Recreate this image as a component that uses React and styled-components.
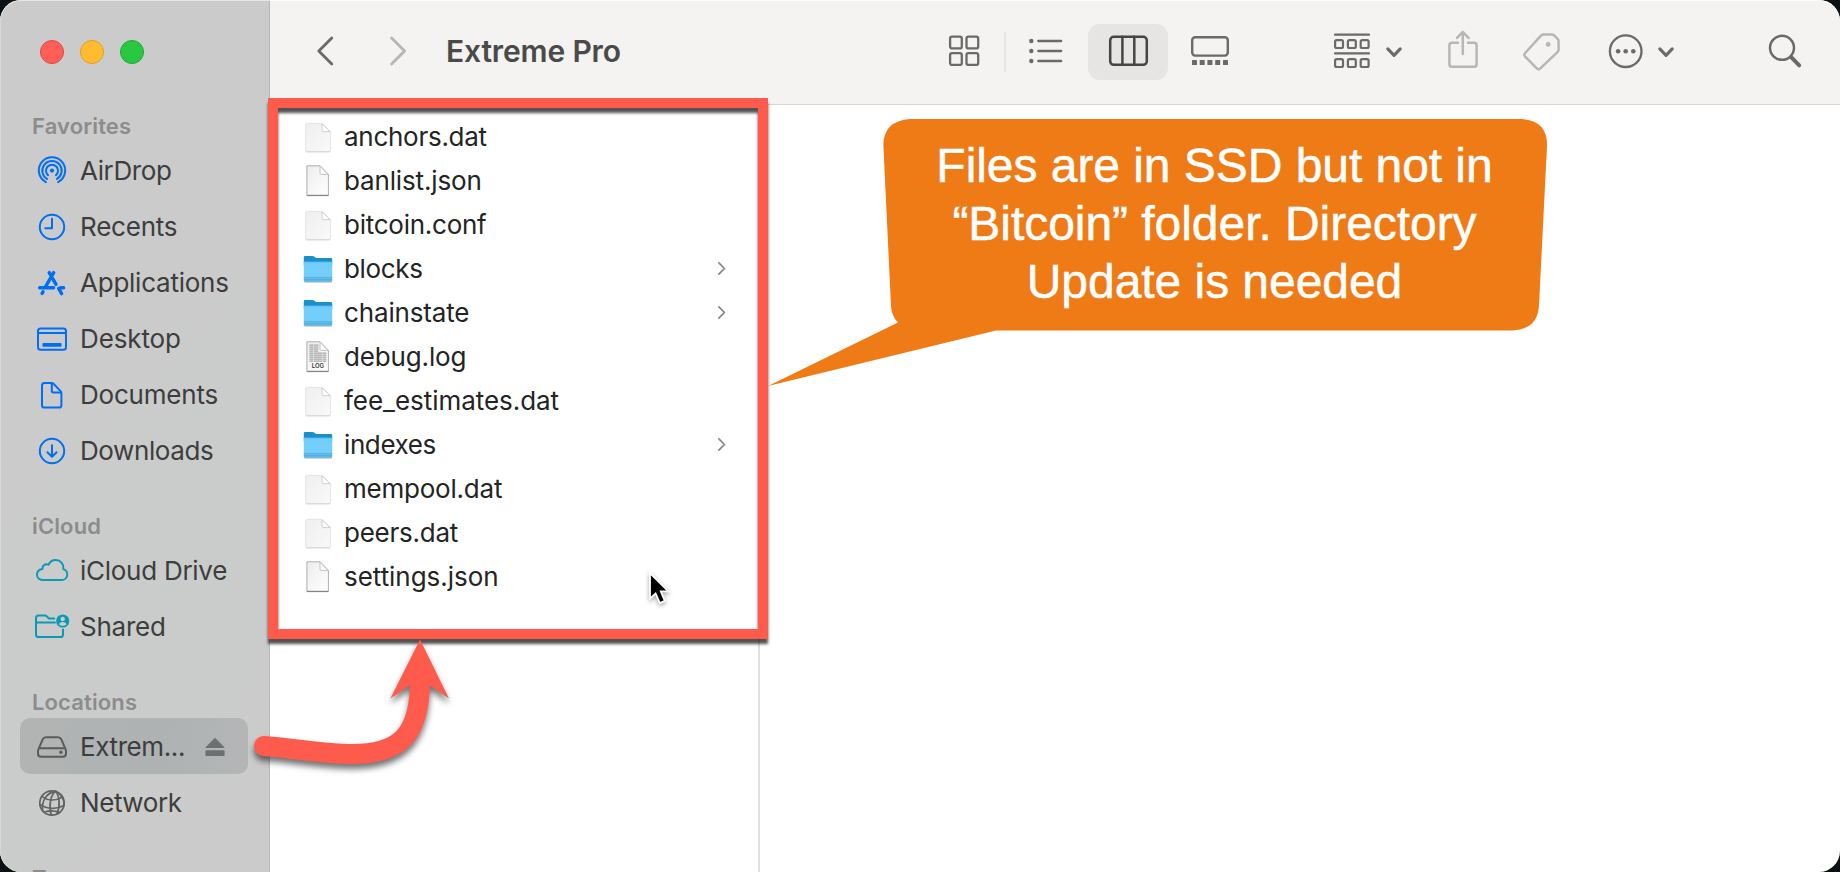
import React from "react";
import styled, { createGlobalStyle } from "styled-components";

const GlobalStyle = createGlobalStyle`
  html, body { margin: 0; height: 100%; background: #0d1015; overflow: hidden; }
  *, *::before, *::after { box-sizing: border-box; }
  svg { display: block; flex: none; overflow: visible; }
`;

const Window = styled.div`
  position: relative;
  display: flex;
  width: 1840px;
  height: 872px;
  border-radius: 21px;
  overflow: hidden;
  background: #fff;
  font-family: Inter, "Liberation Sans", sans-serif;
  &::after {
    content: "";
    position: absolute;
    inset: 0;
    border-radius: 21px;
    box-shadow: inset 0 1px 0 rgba(255, 255, 255, 0.55), inset 1px 0 0 rgba(255, 255, 255, 0.25);
    pointer-events: none;
  }
`;

const Sidebar = styled.nav`
  flex: none;
  width: 270px;
  height: 872px;
  overflow: hidden;
  background: linear-gradient(135deg, #cbcbcb 35%, #cacccb 60%, #cbcbcb);
  border-right: 1px solid #b8b8b8;
  padding-top: 40px;
`;

const TrafficLights = styled.div`
  display: flex;
  gap: 16px;
  padding-left: 40px;
  height: 70px;
`;

const Light = styled.span`
  width: 24px;
  height: 24px;
  border-radius: 50%;
  background: ${(p) => p.$fill};
  border: 1px solid ${(p) => p.$edge};
`;

const Section = styled.section`
  margin-bottom: 32px;
`;

const SectionTitle = styled.h2`
  margin: 0;
  padding-left: 32px;
  height: 32px;
  font-size: 22px;
  line-height: 32px;
  font-weight: 600;
  letter-spacing: 0.13px;
  color: #8c8c8c;
`;

const SidebarItem = styled.div`
  display: flex;
  align-items: center;
  height: 56px;
  margin: 0 21px 0 20px;
  padding: 0 23px 0 16px;
  border-radius: 10px;
  background: ${(p) => (p.$selected ? "linear-gradient(100deg, #b2b4b3, #aeb2b3 60%, #b4b6b6)" : "transparent")};
`;

const SidebarLabel = styled.span`
  flex: 1;
  min-width: 0;
  margin-left: 12px;
  padding-top: 2px;
  font-size: 26px;
  line-height: 54px;
  letter-spacing: ${(p) => p.$track || 0}px;
  white-space: nowrap;
  color: #3d3d3d;
`;

const Main = styled.main`
  flex: 1;
  display: flex;
  flex-direction: column;
`;

const Toolbar = styled.header`
  display: flex;
  align-items: center;
  height: 105px;
  padding: 0 40px 1px 47px;
  background: #f4f3f1;
  border-bottom: 1px solid #d6d6d6;
  color: #6b6a68;
`;

const Title = styled.h1`
  margin: 0 0 0 39px;
  padding-bottom: 2px;
  width: 503px;
  font-size: 30px;
  line-height: 40px;
  font-weight: 600;
  letter-spacing: -0.15px;
  color: #4a4a49;
`;

const Tool = styled.span`
  display: flex;
  margin-left: ${(p) => p.$gap || 0}px;
  color: ${(p) => (p.$dim ? "#b7b6b4" : "inherit")};
`;

const ToolDivider = styled.span`
  width: 2px;
  height: 40px;
  margin-left: 24px;
  background: #e6e5e3;
`;

const ActiveTool = styled.span`
  display: grid;
  place-items: center;
  width: 80px;
  height: 56px;
  margin-left: 26px;
  border-radius: 12px;
  background: #e6e5e3;
  color: #454543;
`;

const Columns = styled.div`
  flex: 1;
  display: flex;
`;

const Column = styled.ul`
  margin: 0;
  padding: 9px 32px 0 32px;
  width: 490px;
  list-style: none;
  border-right: 2px solid #dfdfdf;
`;

const FileRow = styled.li`
  display: flex;
  align-items: center;
  height: 44px;
`;

const FileName = styled.span`
  flex: 1;
  margin-left: 10px;
  padding-top: 2px;
  font-size: 26px;
  line-height: 42px;
  letter-spacing: ${(p) => p.$track}px;
  white-space: nowrap;
  color: #242424;
`;

const Frame = styled.div`
  position: absolute;
  left: 268px;
  top: 98px;
  width: 500px;
  height: 541px;
  border: 10px solid #ff5b4c;
  filter: drop-shadow(0 5px 1.6px rgba(0, 0, 0, 0.68));
`;

const Arrow = styled.svg`
  position: absolute;
  left: 250px;
  top: 636px;
  filter: drop-shadow(0 5px 3px rgba(0, 0, 0, 0.55));
`;

const Cursor = styled.svg`
  position: absolute;
  left: 646px;
  top: 569px;
  filter: drop-shadow(0 2px 2px rgba(0, 0, 0, 0.35));
`;

const Callout = styled.div`
  position: absolute;
  left: 768px;
  top: 119px;
  width: 780px;
  height: 268px;
`;

const CalloutShape = styled.svg`
  position: absolute;
  left: 0;
  top: 0;
`;

const CalloutText = styled.p`
  position: relative;
  margin: 0;
  padding: 18px 0 0 113px;
  font: 48px/58px "Liberation Sans", Arial, sans-serif;
  letter-spacing: -0.05px;
  -webkit-text-stroke: 0.5px #fff;
  text-align: center;
  color: #fff;
`;

const BLUE = "#006ff2";
const TEAL = "#0a9ab4";
const GRAY = "#626464";

function SideIcon({ color = BLUE, width = 2, children }) {
  return (
    <svg width="32" height="32" viewBox="0 0 32 32" fill="none" stroke={color} strokeWidth={width} strokeLinecap="round" strokeLinejoin="round">
      {children}
    </svg>
  );
}

const AirDropIcon = () => (
  <SideIcon>
    <path d="M9.9 28.1A13.2 13.2 0 1 1 22.1 28.1" />
    <path d="M11 24.9A9.7 9.7 0 1 1 21 24.9" />
    <path d="M12.1 21.2A6 6 0 1 1 19.9 21.2" />
    <circle cx="16" cy="16.6" r="2.1" fill={BLUE} stroke="none" />
  </SideIcon>
);

const RecentsIcon = () => (
  <SideIcon>
    <circle cx="16" cy="17" r="12.2" />
    <path d="M16 8.8V18.2H9.3" />
  </SideIcon>
);

const ApplicationsIcon = () => (
  <SideIcon width={3.4}>
    <path d="M13.2 6.6L20 18.4M22.6 22.4L25.6 27.6M17.7 6.6L9.6 20.6M7 25.8L6.1 27.4M3.6 21.7H17.6M24.6 21.7H27.6" />
  </SideIcon>
);

const DesktopIcon = () => (
  <SideIcon>
    <rect x="2" y="6.4" width="28" height="21.4" rx="2.6" />
    <path d="M2 11H30" strokeWidth="1.8" />
    <rect x="6.5" y="21" width="19" height="3.8" rx="0.8" fill={BLUE} stroke="none" />
  </SideIcon>
);

const DocumentsIcon = () => (
  <SideIcon>
    <path d="M6 7.4Q6 4.9 8.5 4.9H15.4Q16.6 4.9 17.5 5.8L24.6 13.1Q25.4 14 25.4 15.2V27.2Q25.4 29.6 23 29.6H8.5Q6 29.6 6 27.2Z" />
    <path d="M15.8 5.5V12.8Q15.8 14.4 17.4 14.4H24.8" />
  </SideIcon>
);

const DownloadsIcon = () => (
  <SideIcon>
    <circle cx="16" cy="17" r="12.2" />
    <path d="M16 11.2V22.6M11.4 18.2L16 22.8L20.6 18.2" />
  </SideIcon>
);

const CloudIcon = () => (
  <SideIcon color={TEAL}>
    <path d="M7.6 26.1H25.4A5.7 5.7 0 0 0 27.4 15C28 9.8 24.4 6 19.8 6C16.2 6 13.8 7.9 12.6 10.6C9.4 9.2 6.2 11.4 6.4 15C3.2 15.6 1 17.8 1 20.7C1 23.9 3.8 26.1 7.6 26.1Z" />
  </SideIcon>
);

const SharedIcon = () => (
  <SideIcon color={TEAL}>
    <path d="M18.2 8.4H13L10.6 6.2Q10 5.6 9.2 5.6H2.6Q0 5.6 0 8.2V24.4Q0 27 2.6 27H24.4Q27 27 27 24.4V19.4" />
    <path d="M0.4 12.6H19" />
    <circle cx="26.7" cy="11" r="6.6" fill={TEAL} stroke="none" />
    <circle cx="26.7" cy="9" r="2.2" fill="#cacccb" stroke="none" />
    <path d="M22.9 14.6Q23.4 12 26.7 12Q30 12 30.5 14.6Q28.8 16 26.7 16Q24.6 16 22.9 14.6Z" fill="#cacccb" stroke="none" />
  </SideIcon>
);

const DriveIcon = () => (
  <SideIcon color="#585b5c">
    <path d="M10 7.2H22Q24.2 7.2 25.2 9.2L29.2 18.4Q30 20 30 21.4V23.4Q30 26.8 26.6 26.8H5.4Q2 26.8 2 23.4V21.4Q2 20 2.8 18.4L6.8 9.2Q7.8 7.2 10 7.2Z" />
    <path d="M3.6 18.3H28.4" />
    <circle cx="24.9" cy="22.3" r="1.7" fill="#585b5c" stroke="none" />
  </SideIcon>
);

const NetworkIcon = () => (
  <SideIcon color={GRAY} width={1.7}>
    <circle cx="16" cy="17" r="12.2" />
    <path d="M19.6 5.3C14.4 8.6 12.6 20.6 15.2 29" />
    <path d="M19.6 5.3C10.8 6.4 5.4 14.6 6.6 24.8" />
    <path d="M19.6 5.3C23.4 9.6 24.6 20 20.8 28" />
    <path d="M19.6 5.3C25 8 28 13 28 18.6" />
    <path d="M6 10.6C11.6 14.6 19.4 15.4 26.4 11" />
    <path d="M4 18.4C11 23.4 21 23.6 27.8 19.6" />
    <path d="M8.4 26C12.6 24.6 18.6 24.6 23.4 26.4" />
  </SideIcon>
);

const EjectIcon = () => (
  <svg width="20" height="20" viewBox="0 -1 20 20" fill="#6d7070">
    <path d="M10 0.8L19.2 10Q19.8 11 18.6 11H1.4Q0.2 11 0.8 10Z" />
    <rect x="0.4" y="13.2" width="19.2" height="5.8" rx="1" />
  </svg>
);

function FileGlyph({ kind }) {
  const box = { width: 32, height: 32, viewBox: "0 -1 32 32" };
  if (kind === "folder")
    return (
      <svg {...box}>
        <defs>
          <linearGradient id="folderFront" x1="0" y1="0" x2="0" y2="1">
            <stop offset="0" stopColor="#70cdfa" />
            <stop offset="0.74" stopColor="#74cffb" />
            <stop offset="0.8" stopColor="#62c0ef" />
            <stop offset="1" stopColor="#5ab8e8" />
          </linearGradient>
        </defs>
        <rect x="2.2" y="26.4" width="27.8" height="3.4" rx="1" fill="#000" opacity="0.24" />
        <path d="M1.8 4.4Q1.8 3 3.2 3H10.6Q11.6 3 12.3 3.7L13.4 4.6Q14 5.1 15 5.1H28.8Q30.2 5.1 30.2 6.5V12H1.8Z" fill="#1a8fcb" />
        <path d="M1.8 8.7H30.2V27.4Q30.2 28.8 28.8 28.8H3.2Q1.8 28.8 1.8 27.4Z" fill="url(#folderFront)" />
        <path d="M1.8 8.9H30.2M1.8 24.4H30.2M1.8 26.6H30.2" stroke="#45a6d8" strokeWidth="0.6" />
      </svg>
    );
  if (kind === "dat")
    return (
      <svg {...box}>
        <defs>
          <linearGradient id="pale" x1="0" y1="0" x2="1" y2="1">
            <stop offset="0" stopColor="#efefef" />
            <stop offset="1" stopColor="#f9f9f9" />
          </linearGradient>
        </defs>
        <path d="M5 2.4H20.2L28.6 10.8V29Q28.6 30.6 27 30.6H5Q3.6 30.6 3.6 29V3.8Q3.6 2.4 5 2.4Z" fill="url(#pale)" stroke="#dedede" strokeWidth="0.8" />
        <path d="M4 30.9H28.2" stroke="#cfcfcf" strokeWidth="0.9" />
        <path d="M20 2.8V9.4Q20 10.6 21.2 10.6H28.2Z" fill="#fff" stroke="#c9c9c9" strokeWidth="0.9" />
      </svg>
    );
  return (
    <svg {...box}>
      <defs>
        <linearGradient id="sheet" x1="0" y1="0" x2="1" y2="1">
          <stop offset="0" stopColor="#ededed" />
          <stop offset="1" stopColor="#ffffff" />
        </linearGradient>
      </defs>
      <path d="M4.9 0.8H18.2L26.4 9.4V30.2H4.9Z" fill="url(#sheet)" stroke="#a6a6a6" strokeWidth="0.9" />
      <path d="M4.8 30.6H26.6" stroke="#7d7d7d" strokeWidth="1" />
      <path d="M18 1.2V8.2Q18 9.4 19.2 9.4H26Z" fill="#fff" stroke="#bdbdbd" strokeWidth="0.9" />
      {kind === "log" && (
        <>
          <path d="M7.4 4.2H16.4M7.4 6.2H16.4M7.4 8.2H16.4M7.4 10.2H16.4M7.4 12.2H24.4M7.4 14.2H24.4M7.4 16.2H24.4M7.4 18.2H24.4M7.4 20.2H24.4" stroke="#a6a6a6" strokeWidth="1.3" />
          <path d="M11.6 3.6V21M20.4 12V21" stroke="#e4e4e4" strokeWidth="0.7" />
          <text x="15.9" y="27.2" textAnchor="middle" fontSize="6" fontWeight="600" fontFamily="Inter, sans-serif" fill="#333">LOG</text>
        </>
      )}
    </svg>
  );
}

const RowChevron = () => (
  <svg width="8" height="14" viewBox="0 -1 8 14" fill="none" stroke="#858585" strokeWidth="1.7" strokeLinecap="round" strokeLinejoin="round">
    <path d="M0.9 0.9L6.4 6.5L0.9 12.1" />
  </svg>
);

function ToolIcon({ w, width = 2.3, children }) {
  return (
    <svg width={w} height="48" viewBox={`0 0 ${w} 48`} fill="none" stroke="currentColor" strokeWidth={width} strokeLinecap="round" strokeLinejoin="round">
      {children}
    </svg>
  );
}

const DownCaret = () => (
  <ToolIcon w={16} width={3.1}>
    <path d="M1.8 20.9L8 27.3L14.2 20.9" />
  </ToolIcon>
);

const favorites = [
  { label: "AirDrop", Icon: AirDropIcon, track: -0.38 },
  { label: "Recents", Icon: RecentsIcon, track: -0.22 },
  { label: "Applications", Icon: ApplicationsIcon, track: -0.24 },
  { label: "Desktop", Icon: DesktopIcon, track: -0.12 },
  { label: "Documents", Icon: DocumentsIcon, track: -0.2 },
  { label: "Downloads", Icon: DownloadsIcon, track: -0.4 },
];
const icloud = [
  { label: "iCloud Drive", Icon: CloudIcon, track: -0.27 },
  { label: "Shared", Icon: SharedIcon, track: -0.25 },
];
const locations = [
  { label: "Extrem...", Icon: DriveIcon, track: -0.4, selected: true, eject: true },
  { label: "Network", Icon: NetworkIcon, track: -0.42 },
];

const files = [
  ["anchors.dat", "dat", -0.27],
  ["banlist.json", "json", -0.14],
  ["bitcoin.conf", "dat", -0.25],
  ["blocks", "folder", -0.35],
  ["chainstate", "folder", -0.15],
  ["debug.log", "log", -0.15],
  ["fee_estimates.dat", "dat", -0.04],
  ["indexes", "folder", -0.4],
  ["mempool.dat", "dat", -0.22],
  ["peers.dat", "dat", -0.25],
  ["settings.json", "json", -0.04],
];

function SidebarSection({ title, items }) {
  return (
    <Section>
      <SectionTitle>{title}</SectionTitle>
      {items.map(({ label, Icon, track, selected, eject }) => (
        <SidebarItem key={label} $selected={selected}>
          <Icon />
          <SidebarLabel $track={track}>{label}</SidebarLabel>
          {eject && <EjectIcon />}
        </SidebarItem>
      ))}
    </Section>
  );
}

const square = (x, y, s, r) => <rect key={`${x}-${y}`} x={x} y={y} width={s} height={s} rx={r} />;

export default function App() {
  return (
    <>
      <GlobalStyle />
      <Window>
        <Sidebar>
          <TrafficLights>
            <Light $fill="#ff5f57" $edge="#e2463f" />
            <Light $fill="#febc2e" $edge="#e1a116" />
            <Light $fill="#28c840" $edge="#14ae2b" />
          </TrafficLights>
          <SidebarSection title="Favorites" items={favorites} />
          <SidebarSection title="iCloud" items={icloud} />
          <SidebarSection title="Locations" items={locations} />
          <SidebarSection title="Tags" items={[]} />
        </Sidebar>
        <Main>
          <Toolbar>
            <Tool>
              <ToolIcon w={17} width={2.8}>
                <path d="M14.8 10L1.8 23L14.8 36" />
              </ToolIcon>
            </Tool>
            <Tool $gap={56} $dim>
              <ToolIcon w={17} width={2.8}>
                <path d="M1.6 10L14.6 23L1.6 36" />
              </ToolIcon>
            </Tool>
            <Title>Extreme Pro</Title>
            <Tool>
              <ToolIcon w={31}>
                {square(1.1, 8.7, 11.7, 2)}
                {square(17.5, 8.7, 11.7, 2)}
                {square(1.1, 25.2, 11.7, 2)}
                {square(17.5, 25.2, 11.7, 2)}
              </ToolIcon>
            </Tool>
            <ToolDivider />
            <Tool $gap={22}>
              <ToolIcon w={34}>
                <path d="M10.3 13H33.2M10.3 23H33.2M10.3 33H33.2" />
                <g fill="currentColor" stroke="none">
                  <circle cx="3.3" cy="13" r="2.2" />
                  <circle cx="3.3" cy="23" r="2.2" />
                  <circle cx="3.3" cy="33" r="2.2" />
                </g>
              </ToolIcon>
            </Tool>
            <ActiveTool>
              <ToolIcon w={40} width={2.5}>
                <rect x="2.2" y="8.8" width="36.6" height="28" rx="3.6" />
                <path d="M14.4 8.8V36.8M26.3 8.8V36.8" />
              </ToolIcon>
            </ActiveTool>
            <Tool $gap={22}>
              <ToolIcon w={40} width={2.4}>
                <rect x="2.2" y="9.2" width="35.6" height="18.4" rx="3" />
                <g fill="currentColor" stroke="none">
                  {[2, 9.7, 17.4, 25.2, 33].map((x) => square(x, 32, 5, 0.6))}
                </g>
              </ToolIcon>
            </Tool>
            <Tool $gap={104}>
              <ToolIcon w={36} width={2.2}>
                <path d="M1 6.7H35M1 25.4H35" />
                {[1.1, 13.9, 26.7].map((x) => square(x, 12.1, 7.9, 1.6))}
                {[1.1, 13.9, 26.7].map((x) => square(x, 31.1, 7.9, 1.6))}
              </ToolIcon>
            </Tool>
            <Tool $gap={16}>
              <DownCaret />
            </Tool>
            <Tool $gap={46} $dim>
              <ToolIcon w={30} width={2.5}>
                <path d="M10 14.8H4Q1.4 14.8 1.4 17.4V36.2Q1.4 38.8 4 38.8H26Q28.6 38.8 28.6 36.2V17.4Q28.6 14.8 26 14.8H20" />
                <path d="M14.8 26V4.6M9 9.8L14.8 4L20.6 9.8" />
              </ToolIcon>
            </Tool>
            <Tool $gap={45} $dim>
              <ToolIcon w={37} width={2.5}>
                <path d="M20.4 6.4H28.8Q30.2 6.4 31.2 7.4L34.6 10.8Q35.6 11.8 35.6 13.2V21.6Q35.6 22.8 34.7 23.8L17.4 40.4Q15.6 42 13.8 40.4L2.2 28.6Q0.6 26.8 2.2 25L18.2 7.4Q19.2 6.4 20.4 6.4Z" />
                <circle cx="25.2" cy="16.4" r="2.4" fill="currentColor" stroke="none" />
              </ToolIcon>
            </Tool>
            <Tool $gap={48}>
              <ToolIcon w={35} width={2.3}>
                <circle cx="17.7" cy="23.2" r="15.8" />
                <g fill="currentColor" stroke="none">
                  <circle cx="10.1" cy="23.2" r="2.3" />
                  <circle cx="17.7" cy="23.2" r="2.3" />
                  <circle cx="25.3" cy="23.2" r="2.3" />
                </g>
              </ToolIcon>
            </Tool>
            <Tool $gap={15}>
              <DownCaret />
            </Tool>
            <Tool $gap={95}>
              <ToolIcon w={33} width={2.5}>
                <circle cx="13" cy="19.8" r="12" />
                <path d="M22.2 29.2L30.2 37.4" strokeWidth="4" />
              </ToolIcon>
            </Tool>
          </Toolbar>
          <Columns>
            <Column>
              {files.map(([name, kind, track]) => (
                <FileRow key={name}>
                  <FileGlyph kind={kind} />
                  <FileName $track={track}>{name}</FileName>
                  {kind === "folder" && <RowChevron />}
                </FileRow>
              ))}
            </Column>
          </Columns>
        </Main>
        <Frame />
        <Arrow width="210" height="150" viewBox="250 636 210 150">
          <path d="M264 746C300 749 325 754 352 754C400 754 420 735 420 680" fill="none" stroke="#ff5b4c" strokeWidth="20" strokeLinecap="round" />
          <path d="M420 639.5L449 698.6L430 685.6H409.4L390.4 698.6Z" fill="#ff5b4c" />
        </Arrow>
        <Cursor width="26" height="38" viewBox="0 0 26 38">
          <path d="M4 4V29.6L9.6 24.4L13.8 34L18.8 31.8L14.8 22.4H22.4Z" fill="#000" stroke="#fff" strokeWidth="1.8" />
        </Cursor>
        <Callout>
          <CalloutShape width="780" height="268" viewBox="0 0 780 268" fill="#ef7b17">
            <path d="M142 0H753Q779.5 1 779 27L771 186Q770 210 745 211.4H228L0 267L130 203.6Q123.5 197 123 187L115.4 27Q115 2 142 0Z" />
          </CalloutShape>
          <CalloutText>
            Files are in SSD but not in
            <br />
            “Bitcoin” folder. Directory
            <br />
            Update is needed
          </CalloutText>
        </Callout>
      </Window>
    </>
  );
}
